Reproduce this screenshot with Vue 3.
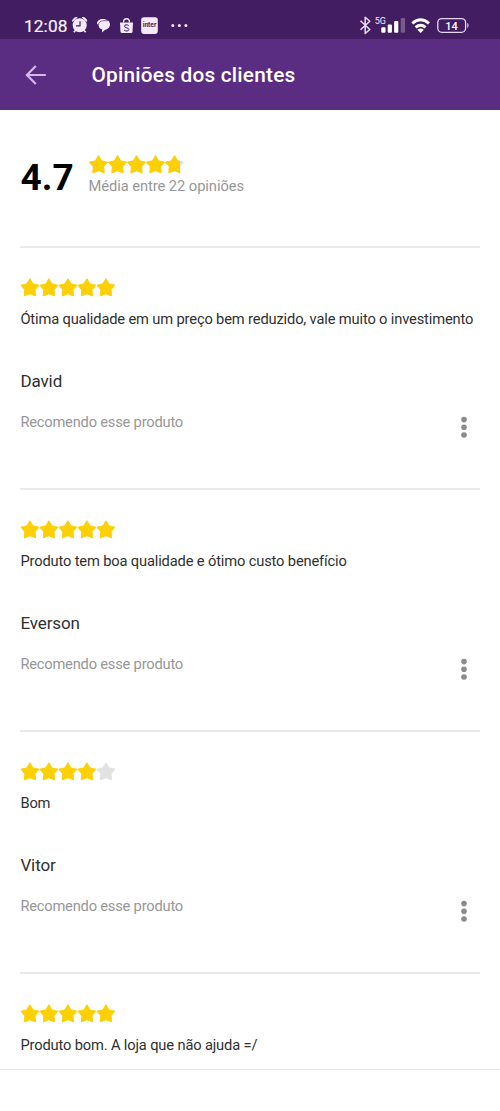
<script setup>
const starPath = 'M9.5 0.7L12.6 5.9L18.5 7.2L14.6 11.8L15.1 17.9L9.5 15.700L3.900 17.900L4.400 11.800L0.500 7.200L6.400 5.900Z'

const average = { score: '4.7', value: 4.7, label: 'Média entre 22 opiniões' }

const reviews = [
  { stars: 5, text: 'Ótima qualidade em um preço bem reduzido, vale muito o investimento', author: 'David', note: 'Recomendo esse produto' },
  { stars: 5, text: 'Produto tem boa qualidade e ótimo custo benefício', author: 'Everson', note: 'Recomendo esse produto' },
  { stars: 4, text: 'Bom', author: 'Vitor', note: 'Recomendo esse produto' },
  { stars: 5, text: 'Produto bom. A loja que não ajuda =/', author: '', note: '' },
]
</script>

<template>
  <div class="screen">
    <div class="status">
      <span class="clock">12:08</span>
      <svg class="left-icons" width="120" height="24" viewBox="70 14 120 24">
        <g fill="#f3e9fa">
          <circle cx="79.7" cy="25.2" r="7" />
          <path d="M72.6 21.4a4 4 0 0 1 4.600-3.900zM86.800 21.400a4 4 0 0 0-4.600-3.900z" stroke="#f3e9fa" stroke-width="1" />
          <path d="M73.800 32.200l2-2.200M85.600 32.200l-2-2.200" stroke="#f3e9fa" stroke-width="1.600" />
          <path d="M80 21.300v4.500h-4" fill="none" stroke="#421d62" stroke-width="1.200" />
          <path d="M97 23.500c0-2.800 2.600-4.600 5.800-4.600 4.200 0 7.200 2.200 7.200 5.600 0 3-2.300 4.800-4.800 5.200L102 32.500v-3.300c-2.200-.4-3.300-1.800-3.300-3.700z" />
          <path d="M98.400 25c0-2.700 2.300-4.300 5.600-4.300h4" fill="none" stroke="#421d62" stroke-width=".6" />
          <path d="M120 22.500h13l-.5 9.300q-.1 1.200-1.300 1.200h-9.400q-1.200 0-1.300-1.200z" />
          <path d="M123.500 22.500c0-5 6-5 6 0" fill="none" stroke="#f3e9fa" stroke-width="1.300" />
          <path d="M128.700 25.500c-1.300-1.100-4.300-1-4.300.7 0 1.900 4.500 1.300 4.500 3.300 0 1.900-3.300 1.900-4.800.6" fill="none" stroke="#421d62" stroke-width="1" />
          <rect x="141.200" y="17.300" width="16.600" height="16.600" rx="2.800" />
          <circle cx="172.800" cy="25.500" r="1.500" />
          <circle cx="179.300" cy="25.500" r="1.500" />
          <circle cx="185.900" cy="25.500" r="1.500" />
        </g>
        <text x="149.500" y="27.400" class="inter" text-anchor="middle">inter</text>
      </svg>
      <svg class="right-icons" width="120" height="24" viewBox="355 14 120 24">
        <path d="M360.500 20.800l9.300 8.700-4.600 4V17.300l4.600 4-9.300 8.500" fill="none" stroke="#eadcf5" stroke-width="1.500" stroke-linejoin="round" />
        <text x="374.800" y="24.200" class="network">5G</text>
        <g fill="#fff">
          <rect x="381.300" y="27.300" width="4.200" height="5.400" rx="1" />
          <rect x="387.700" y="24.500" width="4.200" height="8.200" rx="1" />
          <rect x="394.100" y="21" width="4.200" height="11.700" rx="1" />
          <rect x="400.700" y="18" width="4.400" height="14.700" rx="1" opacity=".28" />
        </g>
        <g fill="none" stroke="#fff" stroke-width="2.900">
          <path d="M412.200 23.400q8.400-7.300 16.800 0" />
          <path d="M415.600 27.300q5-4.200 10 0" />
        </g>
        <path d="M417.400 29.700q3.200-2.300 6.400 0l-3.200 3.300z" fill="#fff" />
        <rect x="437.800" y="18.600" width="27.800" height="13.700" rx="4" fill="none" stroke="#e5d6f0" stroke-width="1.300" />
        <path d="M467.300 22.800q2.600 2.700 0 5.400z" fill="#e5d6f0" />
        <text x="451.600" y="29.600" class="battery" text-anchor="middle">14</text>
      </svg>
    </div>

    <header class="bar">
      <svg class="back" width="22" height="22" viewBox="0 0 22 22">
        <path d="M10.800 1.900L1.900 11l8.900 9.100M2.200 11H20.800" fill="none" stroke="#d5b9eb" stroke-width="2.200" />
      </svg>
      <h1>Opiniões dos clientes</h1>
    </header>

    <main>
      <section class="summary">
        <strong>{{ average.score }}</strong>
        <div class="summary-info">
          <svg class="stars" width="96" height="19" viewBox="0 0 96 19">
            <defs>
              <clipPath id="average-fill"><rect width="91" height="19" /></clipPath>
            </defs>
            <path v-for="n in 5" :key="'e' + n" :d="starPath" :transform="`translate(${(n - 1) * 19} 0)`" class="empty" />
            <g clip-path="url(#average-fill)">
              <path v-for="n in 5" :key="n" :d="starPath" :transform="`translate(${(n - 1) * 19} 0)`" class="full" />
            </g>
          </svg>
          <span>{{ average.label }}</span>
        </div>
      </section>

      <article v-for="(review, i) in reviews" :key="i" class="review">
        <svg class="stars" width="96" height="19" viewBox="-0.4 0 96 19">
          <path
            v-for="n in 5"
            :key="n"
            :d="starPath"
            :transform="`translate(${(n - 1) * 19} 0)`"
            :class="n <= review.stars ? 'full' : 'empty'"
          />
        </svg>
        <p class="comment">{{ review.text }}</p>
        <template v-if="review.author">
          <p class="author">{{ review.author }}</p>
          <div class="foot">
            <span>{{ review.note }}</span>
            <svg width="8" height="24" viewBox="0 0 8 24" fill="#8b8b8b">
              <circle cx="4" cy="4.600" r="2.800" />
              <circle cx="4" cy="12.300" r="2.800" />
              <circle cx="4" cy="20" r="2.800" />
            </svg>
          </div>
        </template>
      </article>
    </main>
    <div class="bottom"></div>
  </div>
</template>

<style>
body {
  margin: 0;
  background: #fff;
}
</style>

<style scoped>
.screen {
  width: 500px;
  height: 1111px;
  display: flex;
  flex-direction: column;
  overflow: hidden;
  background: #fff;
  font-family: Roboto, "Liberation Sans", sans-serif;
  color: #303030;
}
.status {
  flex: none;
  box-sizing: border-box;
  height: 39px;
  padding: 14px 25px 0 24px;
  display: flex;
  background: #421d62;
}
.clock {
  width: 46px;
  font-size: 17.300px;
  line-height: 24px;
  letter-spacing: 0.100px;
  -webkit-text-stroke: 0.200px #f8f0fd;
  color: #f8f0fd;
}
.right-icons {
  margin-left: auto;
}
.inter {
  font: 700 6.600px Roboto, sans-serif;
  fill: #421d62;
}
.network {
  font: 400 9px Roboto, sans-serif;
  fill: #f3e9fa;
}
.battery {
  font: 500 11px Roboto, sans-serif;
  fill: #fff;
}
.bar {
  flex: none;
  box-sizing: border-box;
  height: 71px;
  padding-left: 25px;
  display: flex;
  align-items: center;
  background: #5b2d82;
}
h1 {
  margin: 1px 0 0 44.500px;
  font-size: 20.800px;
  font-weight: 500;
  line-height: 28px;
  letter-spacing: 0.220px;
  color: #fff;
  white-space: nowrap;
}
main {
  flex: none;
  height: 959px;
  overflow: hidden;
}
.summary {
  height: 136px;
  padding-left: 20.500px;
  display: flex;
}
.summary strong {
  width: 68px;
  margin-top: 48px;
  font-size: 37px;
  line-height: 40px;
  font-weight: 700;
  color: #000;
}
.summary-info {
  padding-top: 45px;
  display: flex;
  flex-direction: column;
}
.summary-info span {
  margin-top: 2px;
  font-size: 14.700px;
  line-height: 20px;
  letter-spacing: -0.060px;
  color: #979797;
}
.stars {
  display: block;
}
.full {
  fill: #fdd006;
  stroke: #fdd006;
  stroke-width: 1;
  stroke-linejoin: round;
}
.empty {
  fill: #e2e2e2;
  stroke: #e2e2e2;
  stroke-width: 1;
  stroke-linejoin: round;
}
.review {
  box-sizing: border-box;
  height: 242px;
  margin: 0 20px;
  padding-top: 30px;
  border-top: 2px solid #e9e9e9;
}
.comment,
.author {
  margin: 12px 0 0 0.400px;
  font-size: 14.700px;
  line-height: 20px;
  letter-spacing: -0.155px;
  white-space: nowrap;
}
.author {
  margin-top: 42px;
  font-size: 17px;
  letter-spacing: -0.100px;
}
.foot {
  margin-top: 21px;
  padding: 0 12px 0 0.400px;
  display: flex;
  justify-content: space-between;
  font-size: 14.700px;
  line-height: 20px;
  letter-spacing: -0.210px;
  color: #979797;
}
.foot svg {
  margin-top: 3px;
}
.bottom {
  flex: 1;
  border-top: 1px solid #e2e2e2;
}
</style>
